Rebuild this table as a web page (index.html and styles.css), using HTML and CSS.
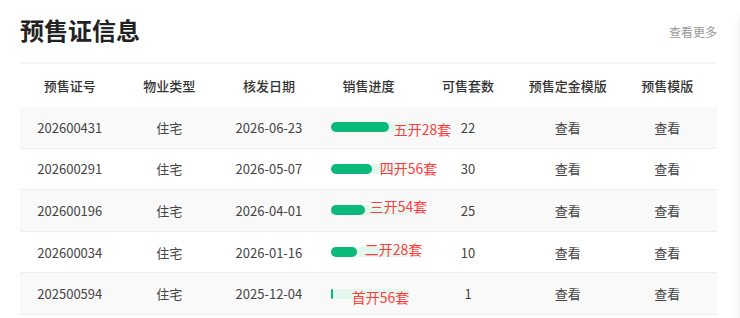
FILE: index.html
```html
<!DOCTYPE html>
<html lang="zh-CN">
<head>
<meta charset="utf-8">
<title>预售证信息</title>
<link rel="stylesheet" href="styles.css">
</head>
<body>
<div class="page">
  <main class="panel">
    <div class="panel-head">
      <h2 class="title">预售证信息</h2>
      <a class="more">查看更多</a>
    </div>
    <div class="table">
      <div class="row head">
        <div class="cell">预售证号</div>
        <div class="cell">物业类型</div>
        <div class="cell">核发日期</div>
        <div class="cell">销售进度</div>
        <div class="cell">可售套数</div>
        <div class="cell">预售定金模版</div>
        <div class="cell">预售模版</div>
      </div>
      <div class="row odd">
        <div class="cell">202600431</div>
        <div class="cell">住宅</div>
        <div class="cell">2026-06-23</div>
        <div class="cell prog"><div class="track"><div class="fill" style="width:58px"></div><span class="label" style="left:63px;top:2px">五开28套</span></div></div>
        <div class="cell">22</div>
        <div class="cell">查看</div>
        <div class="cell">查看</div>
      </div>
      <div class="row">
        <div class="cell">202600291</div>
        <div class="cell">住宅</div>
        <div class="cell">2026-05-07</div>
        <div class="cell prog"><div class="track"><div class="fill" style="width:41px"></div><span class="label" style="left:49px;top:-1px">四开56套</span></div></div>
        <div class="cell">30</div>
        <div class="cell">查看</div>
        <div class="cell">查看</div>
      </div>
      <div class="row odd">
        <div class="cell">202600196</div>
        <div class="cell">住宅</div>
        <div class="cell">2026-04-01</div>
        <div class="cell prog"><div class="track"><div class="fill" style="width:34px"></div><span class="label" style="left:39px;top:-4px">三开54套</span></div></div>
        <div class="cell">25</div>
        <div class="cell">查看</div>
        <div class="cell">查看</div>
      </div>
      <div class="row">
        <div class="cell">202600034</div>
        <div class="cell">住宅</div>
        <div class="cell">2026-01-16</div>
        <div class="cell prog"><div class="track"><div class="fill" style="width:26px"></div><span class="label" style="left:34px;top:-3px">二开28套</span></div></div>
        <div class="cell">10</div>
        <div class="cell">查看</div>
        <div class="cell">查看</div>
      </div>
      <div class="row odd">
        <div class="cell">202500594</div>
        <div class="cell">住宅</div>
        <div class="cell">2025-12-04</div>
        <div class="cell prog"><div class="track"><div class="fill" style="width:2px"></div><span class="label" style="left:21px;top:3px">首开56套</span></div></div>
        <div class="cell">1</div>
        <div class="cell">查看</div>
        <div class="cell">查看</div>
      </div>
    </div>
  </main>
  <aside class="side"></aside>
</div>
</body>
</html>
```

FILE: styles.css
```css
html, body {
  margin: 0;
  padding: 0;
  background: #fff;
  overflow: hidden;
}
body {
  font-family: "Noto Sans CJK SC", "Noto Sans", sans-serif;
  color: #333;
  width: 740px;
  height: 318px;
}
.page {
  display: flex;
  width: 740px;
  height: 318px;
  overflow: hidden;
}
.panel {
  flex: 0 0 697px;
  padding-left: 20px;
}
.panel-head {
  display: flex;
  justify-content: space-between;
  align-items: center;
  height: 62px;
  padding-top: 0;
  box-sizing: border-box;
}
.title {
  margin: 0;
  font-size: 24px;
  line-height: 32px;
  font-weight: 700;
  color: #222;
  padding-top: 0;
  margin-top: -2px;
}
.more {
  font-size: 12px;
  line-height: 16px;
  color: #999;
  margin-top: 2px;
  text-decoration: none;
}
.table {
  border-top: 2px solid #f5f5f5;
}
.row {
  display: grid;
  grid-template-columns: repeat(7, 1fr);
  height: 41.6px;
  box-sizing: border-box;
  border-bottom: 1px solid #eeeeee;
  align-items: center;
  font-size: 13px;
  color: #444;
}
.row.head {
  height: 43px;
  border-bottom: none;
  font-weight: 500;
  color: #333;
}
.row.odd {
  background: #f9f9f9;
}
.cell {
  text-align: center;
  white-space: nowrap;
}
.cell.prog {
  text-align: left;
  padding-left: 12px;
}
.track {
  position: relative;
  width: 79px;
  height: 10px;
  border-radius: 5px;
  background: #e3f7ee;
}
.fill {
  height: 10px;
  border-radius: 5px;
  background: #0bba7b;
}
.label {
  position: absolute;
  top: 0;
  line-height: 10px;
  font-size: 14px;
  color: #ff3d3d;
  white-space: nowrap;
}
.side {
  flex: 0 0 300px;
  margin-left: 23px;
  margin-top: 17px;
  height: 400px;
  background: #fff;
  box-shadow: 0 0 8px rgba(0, 0, 0, 0.09);
}
```
